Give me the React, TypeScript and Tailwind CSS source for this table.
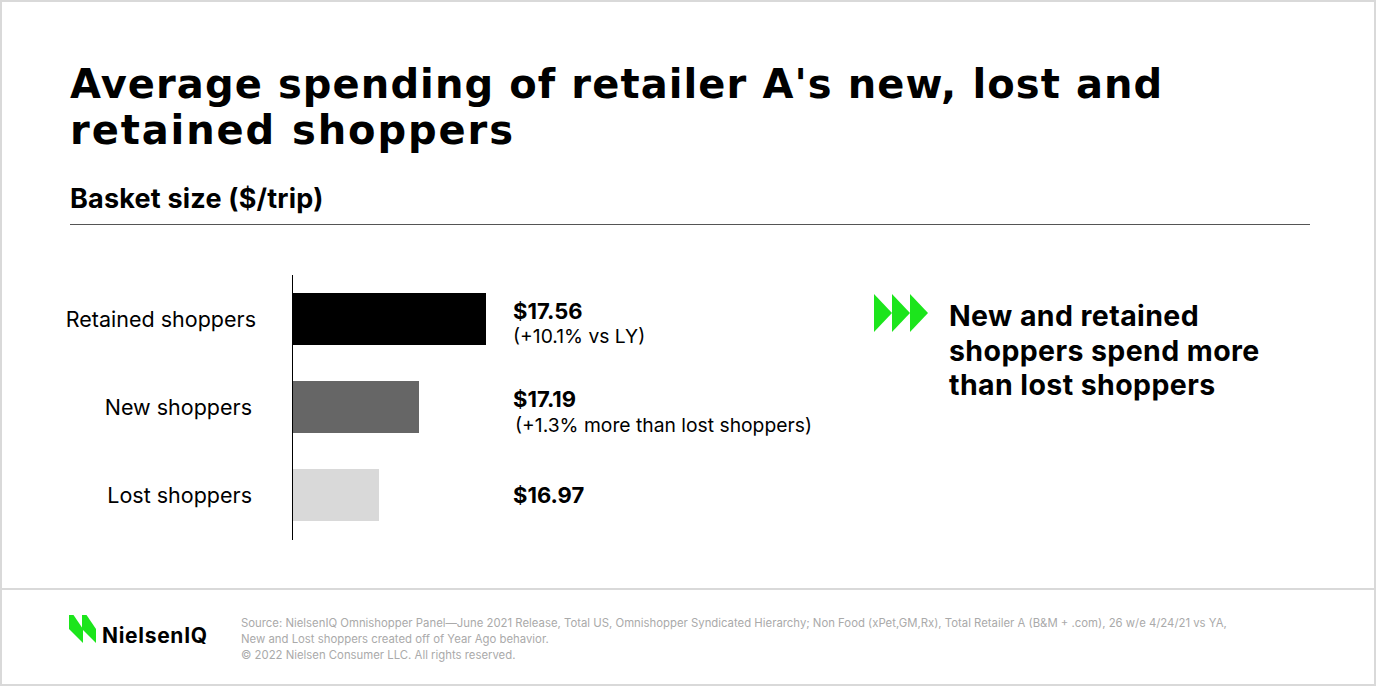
import React from "react";

const rows = [
  { label: "Retained shoppers", width: 193, color: "bg-black", value: "$17.56", note: "(+10.1% vs LY)", labelPad: "pr-0", notePad: "pl-0 pt-[2px]" },
  { label: "New shoppers", width: 126, color: "bg-[#666666]", value: "$17.19", note: "(+1.3% more than lost shoppers)", labelPad: "pr-1", notePad: "pl-[2px] pt-[3px]" },
  { label: "Lost shoppers", width: 86, color: "bg-[#d9d9d9]", value: "$16.97", note: "", labelPad: "pr-1", notePad: "pl-0" },
];

function Arrows() {
  return (
    <svg width="56" height="38" viewBox="0 0 56 38" className="shrink-0">
      <polygon points="0,0 18,19 0,38" fill="#1ce51c" />
      <polygon points="18,0 36,19 18,38" fill="#1ce51c" />
      <polygon points="36,0 54,19 36,38" fill="#1ce51c" />
    </svg>
  );
}

function Logo() {
  return (
    <div className="flex items-end w-[172px] shrink-0">
      <svg width="28" height="28" viewBox="0 0 28 28" className="shrink-0">
        <polygon points="0,0 4.5,0 14,14 14,28 0,14" fill="#1ce51c" />
        <polygon points="13,0 17.5,0 27,14 27,28 13,14" fill="#1ce51c" />
      </svg>
      <span className="ml-[5px] mb-[-3px] text-[21px] leading-none font-bold tracking-[0.7px] text-black font-['Inter',sans-serif]">
        NielsenIQ
      </span>
    </div>
  );
}

export default function App() {
  return (
    <div className="w-[1376px] h-[686px] bg-white border-2 border-[#d9d9d9] flex flex-col font-['Inter',sans-serif] text-black overflow-hidden">
      {/* Main panel */}
      <div className="h-[586px] shrink-0 pl-[68px] pr-[64px] pt-[59px]">
        <h1 className="text-[40px] leading-[46px] font-bold font-['DejaVu_Sans',sans-serif] whitespace-nowrap">
          <span className="tracking-[1.1px]">Average spending of retailer A's new, lost and</span>
          <br />
          <span className="tracking-[1.9px]">retained shoppers</span>
        </h1>
        <h2 className="mt-[30px] text-[27px] leading-[32px] font-bold tracking-[0.2px]">Basket size ($/trip)</h2>
        <div className="mt-[9px] h-px bg-[#555555]" />

        {/* Chart */}
        <div className="mt-[50px] flex h-[265px]">
          <div className="w-[186px] shrink-0 flex flex-col gap-[36px] pt-[18px]">
            {rows.map((r) => (
              <div key={r.label} className={`h-[52px] flex items-center justify-end text-[21.5px] whitespace-nowrap ${r.labelPad}`}>
                {r.label}
              </div>
            ))}
          </div>
          <div className="ml-[36px] w-[221px] shrink-0 border-l border-black flex flex-col gap-[36px] pt-[18px]">
            {rows.map((r) => (
              <div key={r.label} className={`h-[52px] ${r.color}`} style={{ width: r.width }} />
            ))}
          </div>
          <div className="w-[361px] shrink-0 flex flex-col gap-[36px] pt-[18px]">
            {rows.map((r) =>
              r.note ? (
                <div key={r.label} className="h-[52px] pt-[6px]">
                  <div className="text-[22px] leading-[24px] font-bold">{r.value}</div>
                  <div className={`text-[19.3px] leading-[22px] whitespace-nowrap ${r.notePad}`}>{r.note}</div>
                </div>
              ) : (
                <div key={r.label} className="h-[52px] flex items-center">
                  <div className="text-[22px] leading-[24px] font-bold">{r.value}</div>
                </div>
              )
            )}
          </div>
          {/* Callout */}
          <div className="flex items-start">
            <div className="mt-[19px]">
              <Arrows />
            </div>
            <p className="ml-[19px] mt-[24px] text-[28.5px] leading-[34.5px] font-bold tracking-[0.4px] whitespace-nowrap">
              New and retained
              <br />
              shoppers spend more
              <br />
              than lost shoppers
            </p>
          </div>
        </div>
      </div>

      {/* Footer */}
      <div className="flex-1 border-t-2 border-[#d9d9d9] pl-[67px] pt-[25px] flex items-start">
        <Logo />
        <div className="text-[11.35px] leading-[16px] text-[#aaaaaa] whitespace-nowrap">
          <p>
            Source: NielsenIQ Omnishopper Panel—June 2021 Release, Total US, Omnishopper Syndicated Hierarchy; Non Food (xPet,GM,Rx), Total Retailer A (B&amp;M + .com), 26 w/e 4/24/21 vs YA,
          </p>
          <p>New and Lost shoppers created off of Year Ago behavior.</p>
          <p>© 2022 Nielsen Consumer LLC. All rights reserved.</p>
        </div>
      </div>
    </div>
  );
}
